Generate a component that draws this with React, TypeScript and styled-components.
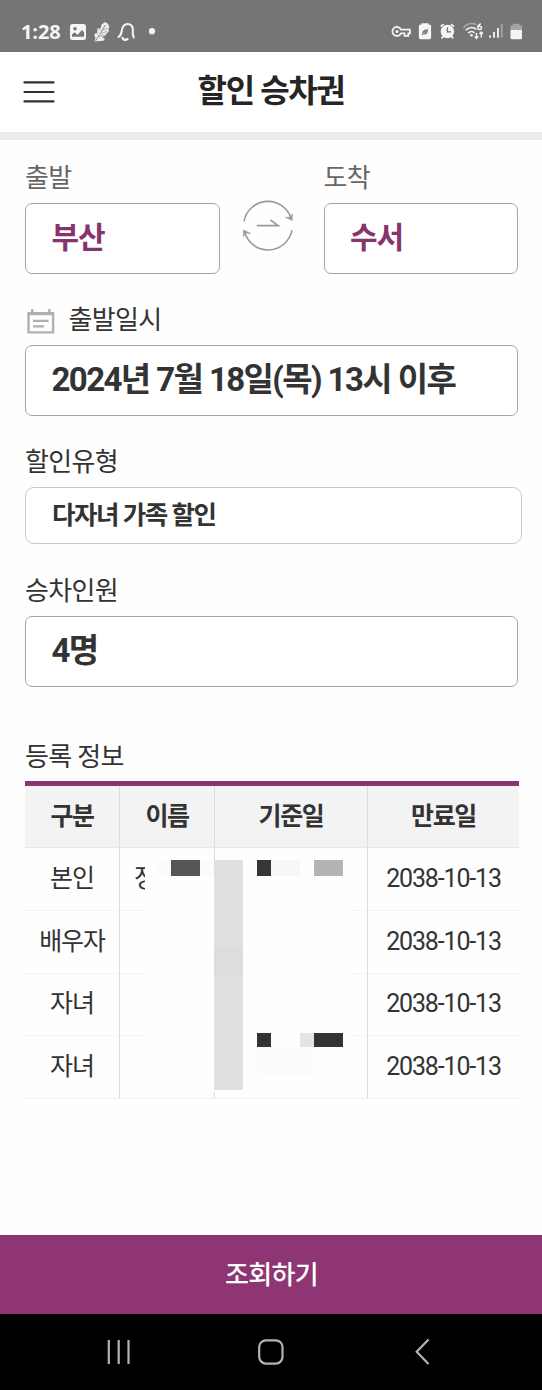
import React from 'react';
import styled, { createGlobalStyle } from 'styled-components';

const GlobalStyle = createGlobalStyle`
  * { box-sizing: border-box; }
  body {
    margin: 0;
    background: #fff;
    color: #333;
    font-family: Roboto, "Noto Sans CJK KR", sans-serif;
  }
`;

const Screen = styled.div`
  width: 542px;
  height: 1390px;
  display: flex;
  flex-direction: column;
  background: #fefefe;
  overflow: hidden;
`;

const StatusBar = styled.header`
  height: 52px;
  padding: 11px 0 0 21px;
  display: flex;
  align-items: flex-start;
  background: #757575;
  color: #f5f5f5;
`;

const Clock = styled.span`
  width: 48px;
  font: 700 20px/41px "Open Sans", sans-serif;
  letter-spacing: -0.1px;
`;

const StatusIcons = styled.svg<{ $offset?: number }>`
  display: block;
  height: 40px;
  margin-left: ${p => p.$offset ?? 0}px;
`;

const TitleBar = styled.div`
  height: 88px;
  padding: 0 23px;
  display: grid;
  grid-template-columns: 32px 1fr 32px;
  align-items: center;
  background: #fff;
  border-bottom: 8.5px solid #ebecee;
`;

const MenuButton = styled.button`
  padding: 0;
  border: 0;
  background: none;
  height: 24px;
`;

const Title = styled.h1`
  margin: 0;
  padding-bottom: 2px;
  font-size: 32px;
  line-height: 40px;
  font-weight: 700;
  letter-spacing: -1.4px;
  text-align: center;
  color: #252525;
`;

const Form = styled.main`
  flex: 1;
  padding: 17px 20px 0 25px;
`;

const Route = styled.div`
  display: grid;
  grid-template-columns: 194.5px 1fr 194.5px;
  width: 493px;
`;

const Swap = styled.svg`
  display: block;
  margin: 43px 0 0 22.5px;
`;

const Label = styled.div<{ $muted?: boolean; $gap?: number }>`
  display: flex;
  align-items: center;
  height: 40px;
  margin: ${p => p.$gap ?? 0}px 0 6px;
  font-size: 26px;
  line-height: 40px;
  letter-spacing: -0.7px;
  padding-top: 2px;
  color: ${p => (p.$muted ? '#666' : '#333')};
`;

const TableTitle = styled(Label)`
  margin: 49px 0 5px;
`;

const CalendarIcon = styled.svg`
  margin: 3px 14px 0 1.5px;
`;

const Field = styled.div<{ $size?: number; $spacing?: number; $accent?: boolean; $compact?: boolean }>`
  max-width: ${p => (p.$compact ? 496.5 : 493)}px;
  height: ${p => (p.$compact ? 57 : 71)}px;
  padding: 0 0 0 ${p => (p.$compact ? 26 : 25.5)}px;
  border: 1px solid ${p => (p.$compact ? '#c9c9c9' : '#a6a6a6')};
  border-radius: ${p => (p.$compact ? 9 : 7)}px;
  background: #fff;
  font-size: ${p => p.$size ?? 33}px;
  line-height: ${p => (p.$compact ? 55 : 68)}px;
  letter-spacing: ${p => p.$spacing ?? -1.6}px;
  font-weight: 700;
  color: ${p => (p.$accent ? '#87346e' : '#333')};
  white-space: nowrap;
`;

const Place = styled(Field)`
  font-size: 30px;
  line-height: 67px;
  letter-spacing: -1px;
`;

const TableWrap = styled.div`
  position: relative;
  width: 494px;
`;

const Table = styled.table`
  width: 494px;
  table-layout: fixed;
  border-collapse: separate;
  border-spacing: 0;
  border-top: 5px solid #8a3571;
  font-size: 25px;
  line-height: 40px;
  letter-spacing: -1.1px;
  text-align: center;
`;

const Cell = styled.td<{ $name?: boolean; $date?: boolean }>`
  height: 62.75px;
  padding: 0 0 0 ${p => (p.$name ? 14 : 0)}px;
  text-align: ${p => (p.$name ? 'left' : 'center')};
  letter-spacing: ${p => (p.$date ? -1.15 : -1.1)}px;
  border-bottom: 1px solid #f3f3f3;
  border-right: 1px solid #ddd;
  &:last-child { border-right: 0; }
`;

const HeadCell = styled.th`
  height: 62px;
  padding: 0;
  background: #f3f3f3;
  border-bottom: 1px solid #e8e8e8;
  border-right: 1px solid #ddd;
  font-weight: 700;
  letter-spacing: -1.4px;
  &:last-child { border-right: 0; }
`;

const Mosaic = styled.svg`
  position: absolute;
  left: 120px;
  top: 79px;
`;

const Submit = styled.button`
  height: 79px;
  padding: 0 0 0 1px;
  border: 0;
  background: #8f3574;
  color: #fff;
  font: 500 26px/40px Roboto, "Noto Sans CJK KR", sans-serif;
  letter-spacing: -0.7px;
`;

const NavBar = styled.nav`
  height: 76px;
  display: flex;
  align-items: center;
  background: #000;
  & > svg { display: block; }
`;

const rows = [
  { kind: '본인', name: '정', expires: '2038-10-13' },
  { kind: '배우자', name: '', expires: '2038-10-13' },
  { kind: '자녀', name: '', expires: '2038-10-13' },
  { kind: '자녀', name: '', expires: '2038-10-13' },
];

/* x, y, width, height, fill */
const tiles: [number, number, number, number, string][] = [
  [12, 0, 14, 16, '#fbfbfb'],
  [26, 0, 29, 16, '#555'],
  [55, 0, 14, 16, '#fbfbfb'],
  [69, 0, 29, 230, '#e0e0e0'],
  [69, 88, 29, 28, '#ddd'],
  [112, 0, 14, 16, '#373737'],
  [126, 0, 29, 16, '#f7f7f7'],
  [169, 0, 29, 16, '#b4b4b4'],
  [112, 173, 14, 14, '#333'],
  [155, 173, 14, 14, '#e4e4e4'],
  [169, 173, 29, 14, '#333'],
  [112, 187, 57, 28, '#fcfcfc'],
];

function LeftStatus() {
  return (
    <StatusIcons width="100" height="40" viewBox="69 11 100 40" fill="none" stroke="#f5f5f5">
      <rect x="70" y="24" width="16" height="16" rx="2.5" fill="#f5f5f5" stroke="none" />
      <circle cx="75" cy="28.7" r="1.7" fill="#757575" stroke="none" />
      <path d="M72 36.8v-2.2l2.6-2.4 3 2.8 4.3-5 2.2 2.2v4.6z" fill="#757575" stroke="none" />
      <path d="M105 22l2.6 1.4 1.8 3.3-1 2.6.5 2.1-2.4 2.2-1 2-3.5 1.4 2.8 1.8-1.2 2-9.2.8 1-3.2-1.2-4.3 2.9-1.4.3-4.2 3.4-.5.7-3.4z" fill="#ececec" stroke="none" />
      <path d="M95.5 41l5.2-8 4.6-8" stroke="#757575" strokeWidth=".8" />
      <path d="M99 36.6l6-1.8M101 33.4l6-2M102.8 30l5-1.8M97.5 34.5l-.4-2.4M100 30.5l-.6-2.4" stroke="#757575" strokeWidth=".5" />
      <path d="M118.5 37c1.8-1 2.7-2.7 3.2-6 .5-4 2.6-7 6.2-7 3.8 0 5.5 3.4 4.9 7-.3 3 .1 4.8 1 6.4" strokeWidth="2" strokeLinecap="round" />
      <path d="M122.5 37.8c.7 2.1 3 3 5 1.1" strokeWidth="2.2" strokeLinecap="round" />
      <circle cx="152" cy="31.2" r="3.1" fill="#f5f5f5" stroke="none" />
    </StatusIcons>
  );
}

function RightStatus() {
  return (
    <StatusIcons $offset={219} width="140" height="40" viewBox="388 11 140 40" fill="none" stroke="#f5f5f5">
      <path d="M401 29.6h9v3.7h-1.7v2.5h-3.7v-2.5H401a4.5 4.5 0 1 1 0-3.7z" strokeWidth="1.7" />
      <circle cx="397" cy="31.4" r="1.5" fill="#f5f5f5" stroke="none" />
      <path d="M421.5 24.5v-1.2h7v1.2h1a1.6 1.6 0 0 1 1.6 1.6v11.5a1.6 1.6 0 0 1-1.6 1.6h-9a1.6 1.6 0 0 1-1.6-1.6V26.1a1.6 1.6 0 0 1 1.6-1.6z" fill="#f5f5f5" stroke="none" />
      <path d="M421.4 34.8l1-1.2c-.5-3 1.6-4.4 5.8-4.6-.1 4.2-1.5 6.1-4.8 5.4l-1 1zM423.3 33.5l3-2.4" fill="#757575" stroke="#f5f5f5" strokeWidth=".4" />
      <circle cx="447.4" cy="31.5" r="6.7" fill="#f5f5f5" stroke="none" />
      <path d="M440.7 26.6l3-2.5M454 26.6l-3-2.5M443.5 36l-2 2.3M451.2 36l2 2.3" strokeWidth="1.8" />
      <path d="M447.4 27.5v4.4h3.6" stroke="#757575" strokeWidth="1.4" />
      <path d="M463.4 28c3.3-4.6 9-5.5 13-3.2" stroke="#aaa" strokeWidth="1.6" />
      <path d="M465.8 30.3c3-3.4 7.7-3.8 10.5-.8M468.2 33.2c2-2.2 4.8-2.2 6.3-.2" strokeWidth="1.6" />
      <circle cx="471.5" cy="35.3" r="1.3" fill="#f5f5f5" stroke="none" />
      <path d="M480.8 23.6c-2.2 1-3.2 2.5-3.1 4.1.1 2.5 3.8 2.4 3.8.1 0-1.8-2.6-2.1-3.6-.7" strokeWidth="1.4" />
      <path d="M476.5 33v5M474.7 36.4l1.8 2 1.8-2M481.3 37.5v-5M479.5 34l1.8-2 1.8 2" strokeWidth="1.4" />
      <path d="M490 35.5v2.3M494 32v5.8M498 28v9.8" strokeWidth="1.8" />
      <path d="M501.7 24v13.8" stroke="#a5a5a5" strokeWidth="1.8" />
      <path d="M510.5 30v-3.3a1.5 1.5 0 0 1 1.5-1.5h1v-1.5h6.5v1.5h1a1.5 1.5 0 0 1 1.5 1.5V30z" fill="#a5a5a5" stroke="none" />
      <path d="M510.5 30H522v7.8a1.5 1.5 0 0 1-1.5 1.5H512a1.5 1.5 0 0 1-1.5-1.5z" fill="#f5f5f5" stroke="none" />
    </StatusIcons>
  );
}

export default function App() {
  return (
    <>
      <GlobalStyle />
      <Screen>
        <StatusBar>
          <Clock>1:28</Clock>
          <LeftStatus />
          <RightStatus />
        </StatusBar>
        <TitleBar>
          <MenuButton aria-label="메뉴">
            <svg width="32" height="24" viewBox="0 0 32 24" stroke="#303030" strokeWidth="2.2" strokeLinecap="round">
              <path d="M1.5 2.4h29M1.5 12h29M1.5 21.4h29" />
            </svg>
          </MenuButton>
          <Title>할인 승차권</Title>
        </TitleBar>
        <Form>
          <Route>
            <div>
              <Label $muted>출발</Label>
              <Place $accent>부산</Place>
            </div>
            <Swap width="52" height="52" viewBox="0 0 52 52" fill="none" stroke="#999" strokeWidth="1.6">
              <path d="M2 21.5A24.3 24.3 0 0 1 49.3 19M50 30.2A24.3 24.3 0 0 1 2.8 32.5" />
              <path d="M43.5 17.2l6.6 3.2.2-6.5-1.4 3.6zM8.5 33.5l-6.9-3.4v6.4l1.3-3.8z" fill="#999" strokeWidth=".7" />
              <path d="M14.8 25.6H36l-7.6-5.7" strokeWidth="1.7" />
            </Swap>
            <div>
              <Label $muted>도착</Label>
              <Place $accent>수서</Place>
            </div>
          </Route>
          <Label $gap={25}>
            <CalendarIcon width="28" height="26" viewBox="0 0 28 26" fill="none" stroke="#b0b0b0" strokeWidth="2.4">
              <path d="M1.5 4.2h24.6v19.2H1.5zM1.5 5h24.6M5.2 0v5M22.4 0v5" />
              <path d="M6 11.8h15.6M6 17.4h11" strokeWidth="2.2" />
            </CalendarIcon>
            출발일시
          </Label>
          <Field>2024년 7월 18일(목) 13시 이후</Field>
          <Label $gap={25}>할인유형</Label>
          <Field $size={25.5} $spacing={-1.5} $compact>다자녀 가족 할인</Field>
          <Label $gap={26}>승차인원</Label>
          <Field>4명</Field>
          <TableTitle>등록 정보</TableTitle>
          <TableWrap>
            <Table>
              <colgroup>
                <col width="95" />
                <col width="95" />
                <col width="153" />
                <col width="151" />
              </colgroup>
              <thead>
                <tr>
                  <HeadCell>구분</HeadCell>
                  <HeadCell>이름</HeadCell>
                  <HeadCell>기준일</HeadCell>
                  <HeadCell>만료일</HeadCell>
                </tr>
              </thead>
              <tbody>
                {rows.map((row, i) => (
                  <tr key={i}>
                    <Cell>{row.kind}</Cell>
                    <Cell $name>{row.name}</Cell>
                    <Cell />
                    <Cell $date>{row.expires}</Cell>
                  </tr>
                ))}
              </tbody>
            </Table>
            <Mosaic width="208" height="232" viewBox="0 0 208 232" shapeRendering="crispEdges">
              <rect width="208" height="232" fill="#fefefe" />
              {tiles.map(([x, y, width, height, fill], i) => (
                <rect key={i} x={x} y={y} width={width} height={height} fill={fill} />
              ))}
            </Mosaic>
          </TableWrap>
        </Form>
        <Submit>조회하기</Submit>
        <NavBar>
          <svg width="542" height="76" viewBox="0 1314 542 76" fill="none" stroke="#b4b4b4" strokeWidth="2.2">
            <path d="M108.8 1340v24M118.7 1340v24M128.5 1340v24" />
            <rect x="259.2" y="1340.3" width="23.3" height="23.3" rx="6.8" />
            <path d="M428.5 1339.5l-11.8 12.3 11.8 12.3" />
          </svg>
        </NavBar>
      </Screen>
    </>
  );
}
